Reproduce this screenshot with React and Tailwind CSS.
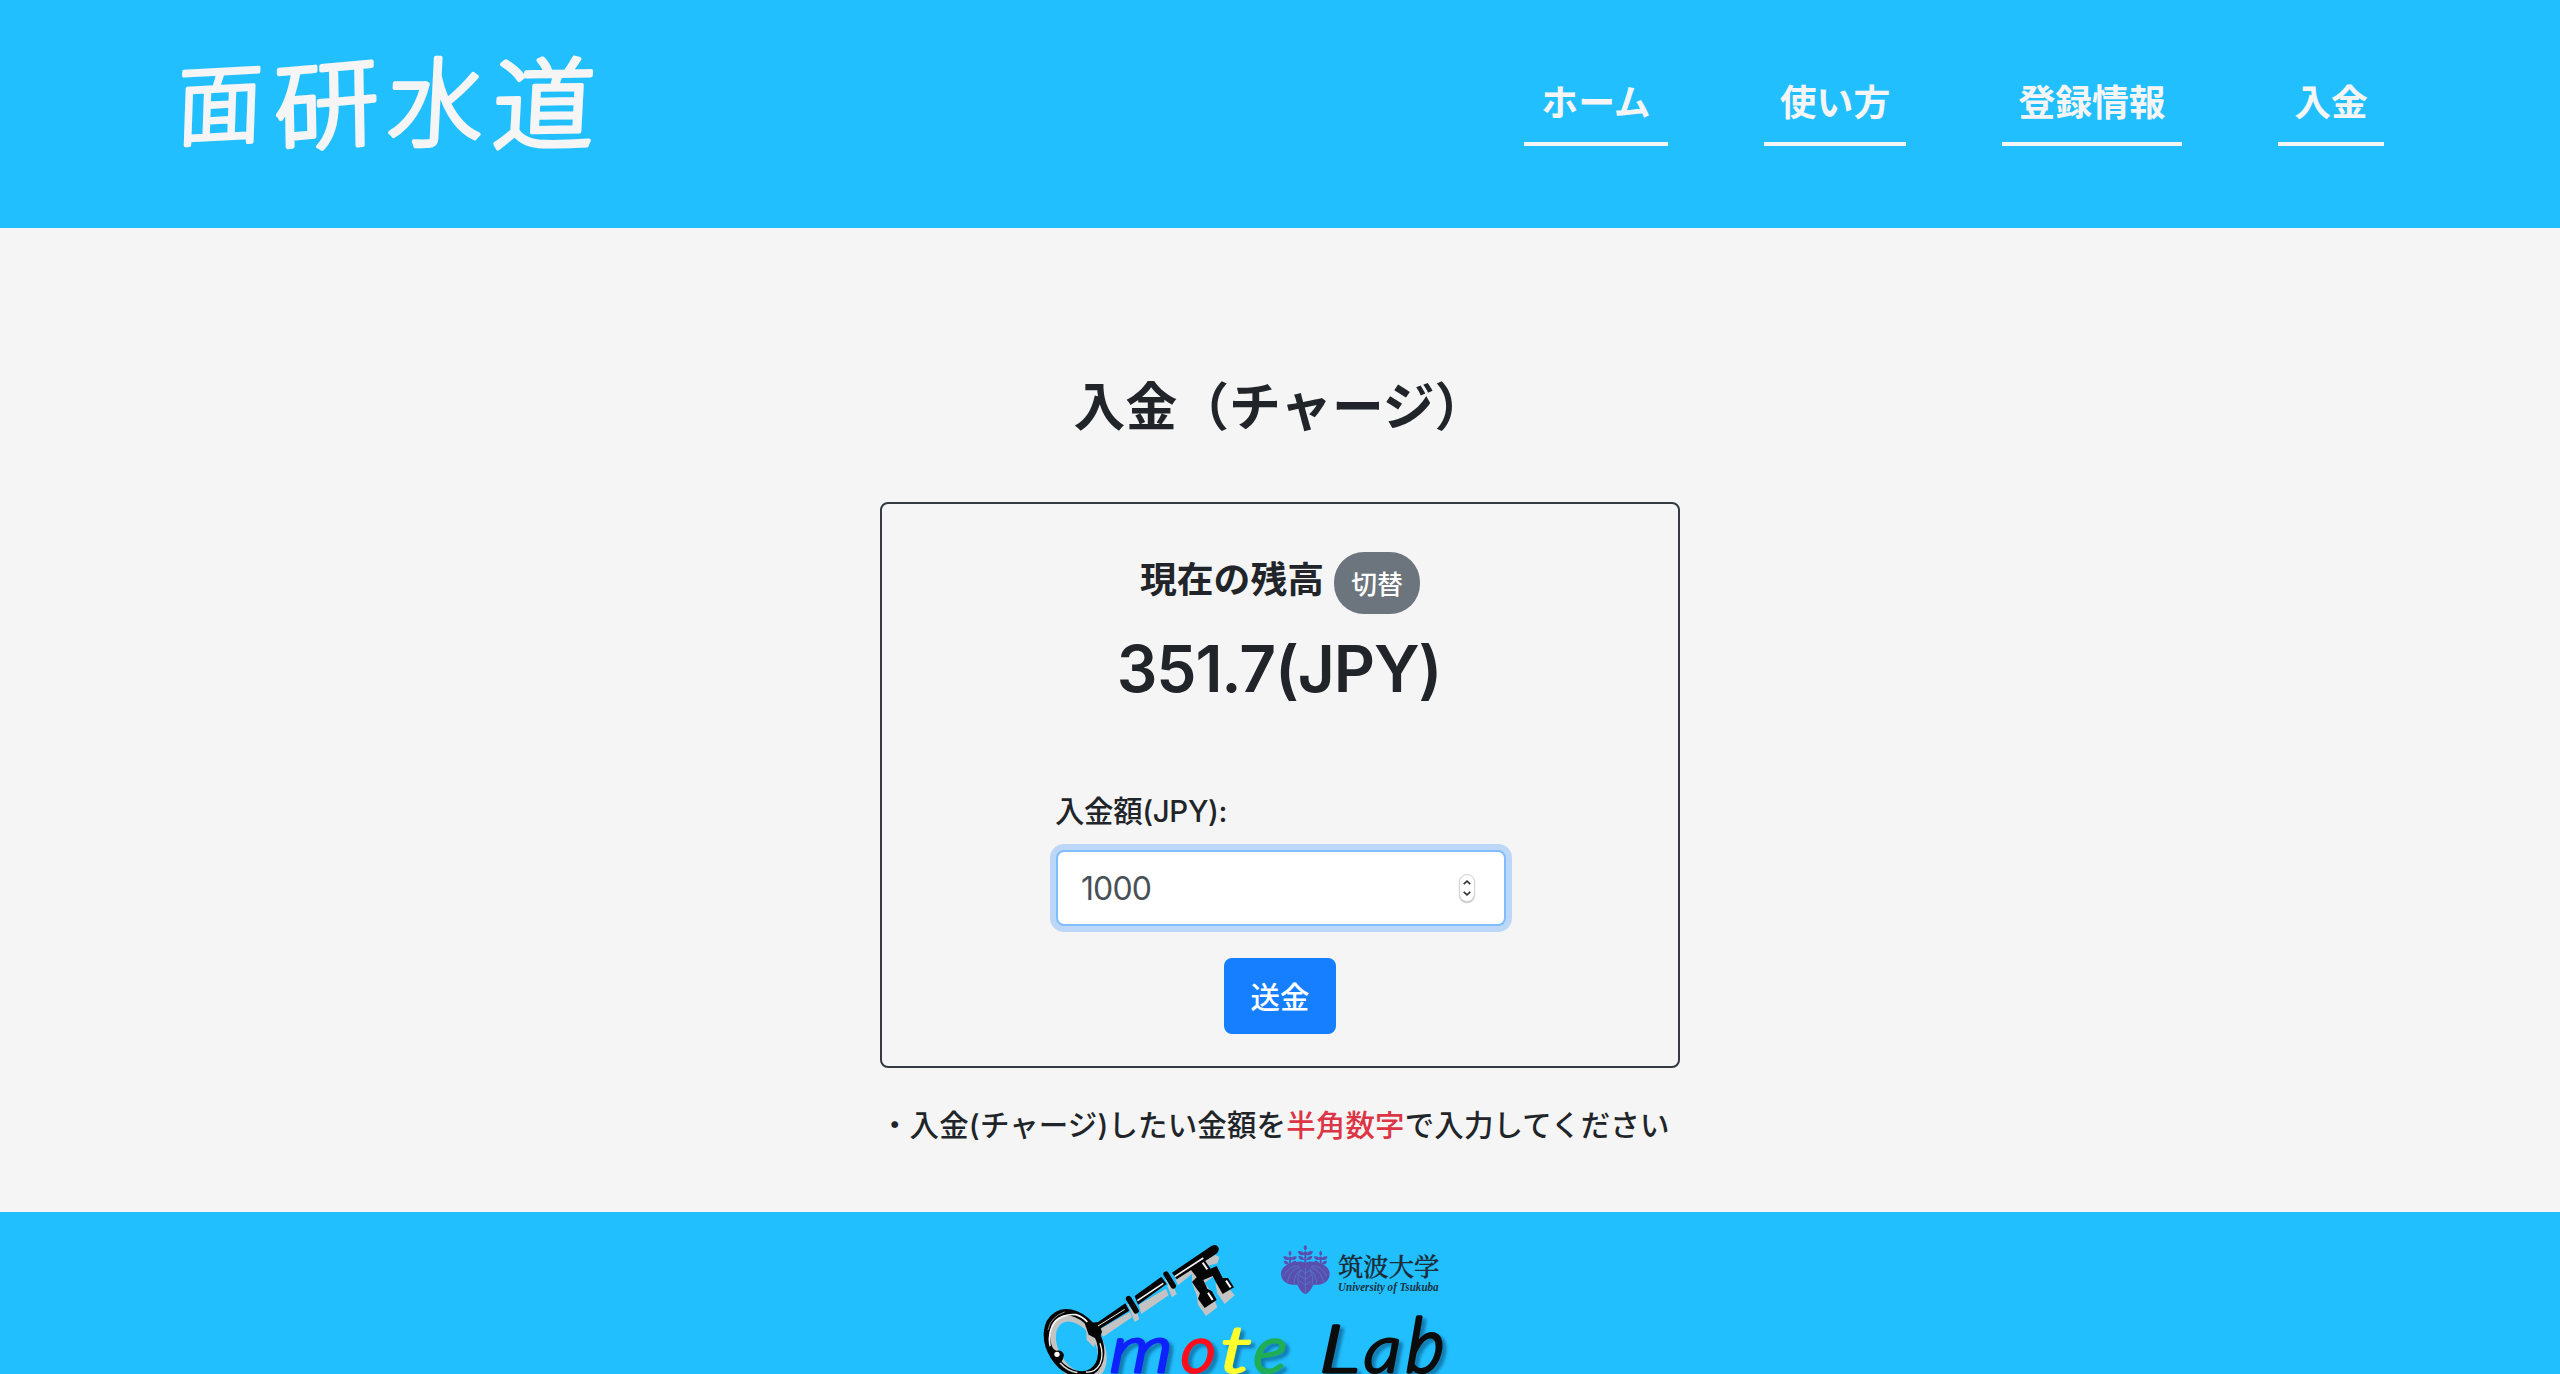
const links = [
  { label: 'ホーム', width: 'w-[144px]' },
  { label: '使い方', width: 'w-[142px]' },
  { label: '登録情報', width: 'w-[180px]' },
  { label: '入金', width: 'w-[106px]' },
];

function SiteLogo() {
  return (
    <svg className="h-[150px] w-[430px] overflow-visible" viewBox="0 0 430 150" role="img" aria-label="面研水道">
      <g
        fill="#f5f5f5"
        stroke="#f5f5f5"
        strokeWidth="3.6"
        strokeLinejoin="round"
        strokeLinecap="round"
        fontFamily='"Noto Sans CJK JP", sans-serif'
        fontSize="88"
        fontWeight="300"
        textAnchor="middle"
      >
        <text transform="translate(43 117) rotate(-3) skewX(-5) scale(0.97 1)">面</text>
        <text transform="translate(151 121) rotate(-5) skewX(-4) scale(1.2 1.1)">研</text>
        <text transform="translate(258 119) skewX(-3) scale(1.08 1.11)">水</text>
        <text transform="translate(366 121) rotate(-1) skewX(-4) scale(1.16 1.13)">道</text>
      </g>
    </svg>
  );
}

function Paulownia() {
  const flowers = [
    [826, 62, 1],
    [780, 78, 0.9],
    [872, 78, 0.9],
  ];
  return (
    <g>
      <g fill="#5a4fae">
        <path d="M826 100c-8-8-22-6-32-2-22 0-40 14-41 32 0 20 14 33 32 34 8 1 14-1 18 2 4 12 12 22 23 27 11-5 19-15 23-27 4-3 10-1 18-2 18-1 32-14 32-34-1-18-19-32-41-32-10-4-24-6-32 2z" />
        {flowers.map(([x, y, s]) => (
          <g key={x} transform={`translate(${x} ${y}) scale(${s})`}>
            <path d="M0-18q10 10 0 18q-10-8 0-18z" />
            <path d="M-3 12q-16 6-20-10q16-4 20 10z" />
            <path d="M3 12q16 6 20-10q-16-4-20 10z" />
            <path d="M-3 28q-18 2-18-12q14-2 18 12z" />
            <path d="M3 28q18 2 18-12q-14-2-18 12z" />
            <circle cx="0" cy="8" r="6" />
            <path d="M-3 4h6v34h-6z" />
          </g>
        ))}
      </g>
      <g fill="none" stroke="#4b86d0" strokeWidth="2">
        <path d="M826 114v76M826 130l-16-12M826 130l16-12M826 148l-20-14M826 148l20-14M826 166l-18-14M826 166l18-14" />
        <path d="M810 112q-30 6-38 44M808 108q-32-2-46 30M812 120q-18 10-20 40" />
        <path d="M842 112q30 6 38 44M844 108q32-2 46 30M840 120q18 10 20 40" />
        <path d="M806 164q-6-26 6-44M846 164q6-26-6-44" />
      </g>
    </g>
  );
}

function KeyDrawing() {
  return (
    <g>
      <g fill="#c3c3c3" stroke="none">
        <path d="M205 300L300 246L306 262L220 320z" />
        <path d="M326 224L408 176L416 196L334 252z" />
        <path d="M300 240L316 232L328 268L314 276z" />
        <path d="M412 168L426 160L440 192L426 202z" />
        <path d="M436 146L556 74L568 82L562 100L530 108L550 140L524 158L546 190L562 232L528 258L504 224L500 196L486 160L486 132L444 166z" />
        <path d="M556 160L584 160L614 196L584 222L562 190z" />
      </g>
      <ellipse cx="141" cy="352" rx="66" ry="98" transform="rotate(-32 141 352)" fill="none" stroke="#c3c3c3" strokeWidth="26" />
      <path d="M168 290L202 312L192 352L170 330z" fill="#c3c3c3" />
      <ellipse cx="132" cy="340" rx="73" ry="100" transform="rotate(-32 132 340)" fill="none" stroke="#050505" strokeWidth="19" />
      <path d="M60 350q-8-46 16-76q26-24 62-20q20 6 34 22" fill="none" stroke="#f5f5f5" strokeWidth="5" />
      <path d="M54 300q8-40 50-54" fill="none" stroke="#8a8a8a" strokeWidth="3" />
      <path d="M210 340q12 34 0 62q-14 26-42 24" fill="none" stroke="#f5f5f5" strokeWidth="4" />
      <path d="M90 398q20 24 52 30" fill="none" stroke="#d8d8d8" strokeWidth="5" />
      <path d="M58 346L78 362Q98 358 102 376Q100 390 90 400L66 388z" fill="#050505" />
      <circle cx="81" cy="373" r="8" fill="#fff" />
      <path d="M164 280L206 276L216 306L206 330L176 314z" fill="#050505" />
      <path d="M190 286L286 220L298 242L204 300z" fill="#050505" />
      <path d="M204 288L284 238" stroke="#eee" strokeWidth="3" />
      <path d="M296 206L318 242" stroke="#050505" strokeWidth="17" strokeLinecap="round" />
      <path d="M293 222L306 244" stroke="#ccc" strokeWidth="3" />
      <path d="M314 198L394 140L410 162L324 224z" fill="#050505" />
      <path d="M322 212L400 160" stroke="#f5f5f5" strokeWidth="5" />
      <path d="M408 132L430 168" stroke="#050505" strokeWidth="16" strokeLinecap="round" />
      <path d="M406 148L418 168" stroke="#ccc" strokeWidth="3" />
      <path d="M426 128L544 48q16-8 22 6q2 12-8 18L440 148z" fill="#050505" />
      <path d="M434 140L520 84" stroke="#f5f5f5" strokeWidth="5" />
      <path d="M480 116L522 88L542 116L560 108L578 144L594 144L612 172L578 192L562 164L548 138L520 150L532 176L546 184L560 210L524 234L504 206L510 190L498 174L486 156L500 142z" fill="#050505" />
      <path d="M518 98L532 118" stroke="#eee" strokeWidth="6" />
      <path d="M534 188L548 210" stroke="#fff" strokeWidth="6" />
      <path d="M588 152L602 172" stroke="#fff" strokeWidth="6" />
    </g>
  );
}

function LabLogo() {
  // character, left edge, horizontal scale, vertical scale, colour
  const letters = [
    ['m', 238, 1.22, 1.0, '#0d22ff'],
    ['o', 450, 1.04, 0.98, '#ff0d1c'],
    ['t', 568, 1.38, 0.98, '#ffff2e'],
    ['e', 668, 1.08, 0.98, '#1fae56'],
    ['L', 866, 1.32, 1.0, '#0c0c0c'],
    ['a', 1000, 1.12, 1.0, '#0c0c0c'],
    ['b', 1126, 1.12, 1.16, '#0c0c0c'],
  ];
  return (
    <svg className="h-[144px] w-[440px] overflow-visible" viewBox="0 0 1320 432" role="img" aria-label="Omote Lab">
      <KeyDrawing />
      <Paulownia />
      <text x="924" y="138" fontFamily='"Noto Serif CJK JP", "Noto Sans CJK JP", serif' fontSize="74" fill="#1b2a33" stroke="#1b2a33" strokeWidth="1" textLength="304" lengthAdjust="spacingAndGlyphs">筑波大学</text>
      <text x="924" y="182" fontFamily='"Liberation Serif", serif' fontStyle="italic" fontWeight="700" fontSize="37" fill="#16333f" textLength="302" lengthAdjust="spacingAndGlyphs">University of Tsukuba</text>
      <g fontFamily="Lato, sans-serif" fontStyle="italic" fontWeight="300" fontSize="196" strokeWidth="9" strokeLinejoin="round" style={{ filter: 'drop-shadow(12px 10px 5px rgba(0,60,100,.5))' }}>
        {letters.map(([ch, x, sx, sy, color]) => (
          <text key={ch} transform={`translate(${x} 427) skewX(-3) scale(${sx} ${sy})`} fill={color} stroke={color}>{ch}</text>
        ))}
      </g>
    </svg>
  );
}

function Stepper() {
  return (
    <span className="flex h-7 w-4 flex-col items-center justify-center gap-1.5 rounded-full border border-[#d4d4d4] bg-white shadow-[0_1px_1px_rgba(0,0,0,0.25)]">
      <svg className="h-[5px] w-2" viewBox="0 0 8 5" fill="none" stroke="#333" strokeWidth="1.6"><path d="M.7 4.2L4 1.2l3.3 3" /></svg>
      <svg className="h-[5px] w-2" viewBox="0 0 8 5" fill="none" stroke="#333" strokeWidth="1.6"><path d="M.7.8L4 3.8l3.3-3" /></svg>
    </span>
  );
}

export default function App() {
  return (
    <div className="flex h-[1374px] w-[2560px] flex-col overflow-hidden bg-[#f5f5f5] font-medium text-[#212529] [font-family:Inter,'Noto_Sans_CJK_JP',sans-serif]">
      <header className="flex h-[228px] shrink-0 items-start justify-between bg-[#22bfff] pt-5 pr-44 pl-[176px]">
        <SiteLogo />
        <nav className="flex gap-24 pt-[26px]">
          {links.map((link) => (
            <a key={link.label} className={`${link.width} h-[100px] whitespace-nowrap border-b-4 border-[#f5f5f5] pt-[29px] text-center text-[36.8px] leading-[56px] font-bold text-[#f5f5f5]`}>
              {link.label}
            </a>
          ))}
        </nav>
      </header>

      <main className="flex h-[984px] shrink-0 flex-col items-center pt-[147px]">
        <h1 className="h-[127px] text-[51.8px] leading-[64px] font-bold">入金（チャージ）</h1>
        <section className="flex h-[566px] w-[800px] flex-col items-center rounded-lg border-2 border-[#343a40] pt-12">
          <div className="flex h-[62px] items-center gap-[10px]">
            <h2 className="pb-1.5 text-[36.8px] leading-[44px] font-bold">現在の残高</h2>
            <button className="h-[62px] w-[86px] rounded-[30px] bg-[#6c757d] pt-1 text-[25.8px] leading-[38px] text-white">切替</button>
          </div>
          <p className="mt-[15px] mr-0.5 text-[64px] leading-[80px] font-semibold tracking-[-1.1px]">351.7(JPY)</p>
          <form className="mt-[80px] ml-0.5 flex w-[450px] flex-col">
            <label className="-ml-px text-[29.44px] leading-[44px] tracking-[-0.35px]">入金額(JPY):</label>
            <div className="mt-[17px] flex h-[76px] items-center justify-between rounded-lg border-2 border-[#80bdff] bg-white pr-[29px] pl-[23px] text-[32px] font-normal tracking-[-0.9px] text-[#495057] shadow-[0_0_0_6px_#bcd7f7]">
              <span className="pt-0.5">1000</span>
              <Stepper />
            </div>
            <button className="mt-8 mr-0.5 h-[76px] w-28 self-center rounded-lg bg-[#167fff] pt-0.5 text-[29.44px] text-white">送金</button>
          </form>
        </section>
        <p className="mt-[35px] w-[800px] whitespace-nowrap text-[29.44px] leading-[44px] tracking-[0.18px]">
          ・入金(チャージ)したい金額を<span className="text-[#dc3545]">半角数字</span>で入力してください
        </p>
      </main>

      <footer className="flex h-[162px] shrink-0 bg-[#22bfff] pt-[18px] pl-[1030px]">
        <LabLogo />
      </footer>
    </div>
  );
}
